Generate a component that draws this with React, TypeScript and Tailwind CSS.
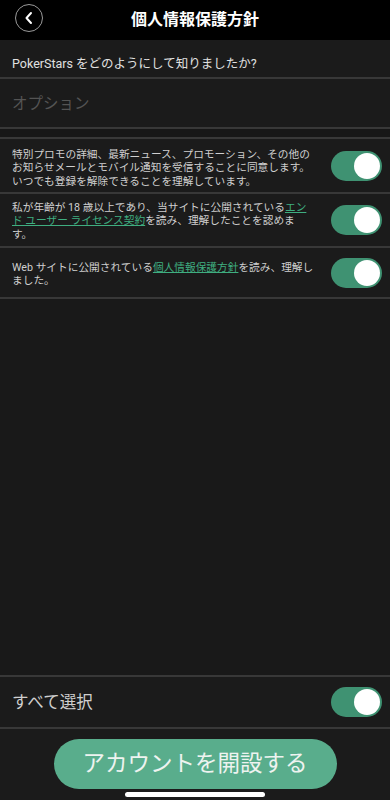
import React from "react";

const font = { fontFamily: 'Roboto, "Noto Sans CJK JP", sans-serif' };

function Toggle() {
  return (
    <div className="w-[51px] h-[30px] rounded-full bg-[#3f9272] flex items-center justify-end pr-[2px] shrink-0">
      <div className="w-[26px] h-[26px] rounded-full bg-white" />
    </div>
  );
}

function Line() {
  return <div className="h-[2px] bg-[#383838]" />;
}

export default function App() {
  return (
    <div className="w-[390px] h-[800px] bg-[#1b1b1b] flex flex-col text-[#d4d4d4] overflow-hidden" style={font}>
      <div className="h-[40px] bg-black flex items-center relative shrink-0">
        <div className="absolute left-[15px] top-[4px] w-[28px] h-[28px] rounded-full border-[1.5px] border-[#9a9a9a] flex items-center justify-center">
          <svg width="12" height="14" viewBox="0 0 12 14" fill="none">
            <path d="M8 2 L3.5 7 L8 12" stroke="white" strokeWidth="2" strokeLinecap="round" strokeLinejoin="round" />
          </svg>
        </div>
        <div className="w-full text-center text-[16px] font-bold text-white -mt-[1px]">個人情報保護方針</div>
      </div>

      <div className="h-[37px] flex items-center px-[12px] text-[12.5px] text-[#e0e0e0] pt-[11px]">
        PokerStars をどのようにして知りましたか?
      </div>
      <Line />
      <div className="h-[48px] flex items-center px-[12px] text-[15.5px] text-[#545454] pt-[3px]">オプション</div>
      <Line />
      <div className="h-[8px] bg-[#171717]" />
      <Line />

      <div className="h-[53px] flex items-center pl-[12px] pr-[8px] gap-[8px]">
        <div className="flex-1 text-[10.7px] leading-[13.3px] text-[#cfcfcf] pt-[5px] whitespace-nowrap">
          特別プロモの詳細、最新ニュース、プロモーション、その他の
          <br />
          お知らせメールとモバイル通知を受信することに同意します。
          <br />
          いつでも登録を解除できることを理解しています。
        </div>
        <Toggle />
      </div>
      <Line />
      <div className="h-[52px] flex items-center pl-[12px] pr-[8px] gap-[8px]">
        <div className="flex-1 text-[10.7px] leading-[13.3px] text-[#cfcfcf] pt-[2px] whitespace-nowrap">
          私が年齢が 18 歳以上であり、当サイトに公開されている<span className="text-[#3fae80] underline">エン</span>
          <br />
          <span className="text-[#3fae80] underline">ド ユーザー ライセンス契約</span>を読み、理解したことを認めま
          <br />
          す。
        </div>
        <Toggle />
      </div>
      <Line />
      <div className="h-[49px] flex items-center pl-[12px] pr-[8px] gap-[8px]">
        <div className="flex-1 text-[10.7px] leading-[13.3px] text-[#cfcfcf] pt-[3px] whitespace-nowrap">
          Web サイトに公開されている<span className="text-[#3fae80] underline">個人情報保護方針</span>を読み、理解し
          <br />
          ました。
        </div>
        <Toggle />
      </div>
      <Line />

      <div className="flex-1 bg-[#191919]" />

      <Line />
      <div className="h-[50px] flex items-center pl-[12px] pr-[8px] justify-between">
        <div className="text-[16.5px] text-[#cfcfcf] pt-[2px]">すべて選択</div>
        <Toggle />
      </div>
      <Line />
      <div className="h-[71px] flex flex-col items-center shrink-0 pt-[10px]">
        <div className="w-[283px] h-[50px] rounded-full bg-[#59ad8c] flex items-center justify-center text-[22.5px] text-[#eef3f0]">
          アカウントを開設する
        </div>
        <div className="mt-[3px] w-[140px] h-[5px] rounded-full bg-white" />
      </div>
    </div>
  );
}
